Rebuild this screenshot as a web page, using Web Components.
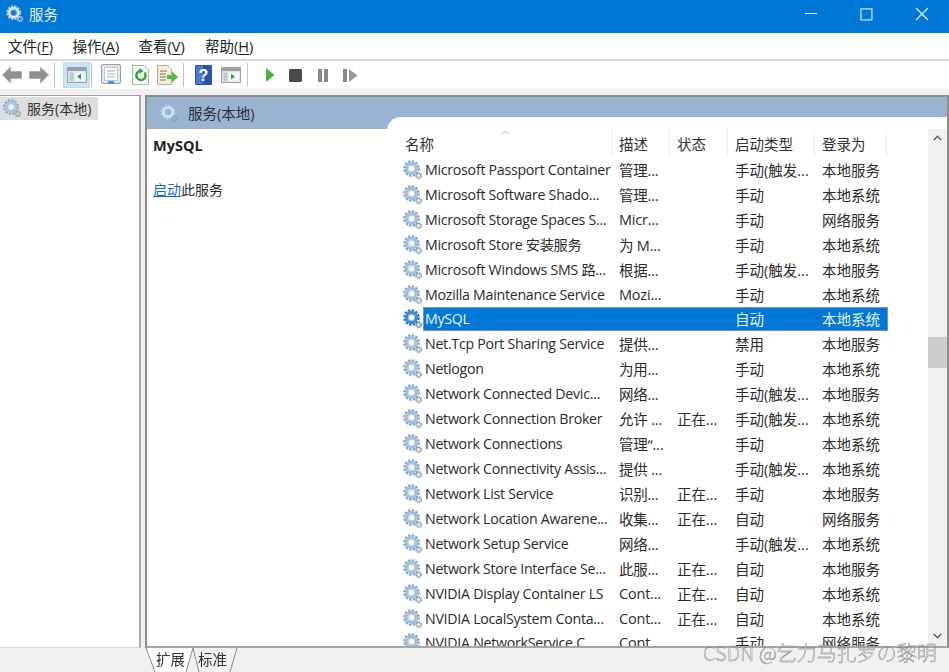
<!DOCTYPE html>
<html lang="zh"><head><meta charset="utf-8"><title>服务</title>
<style>
html,body{margin:0;padding:0;background:#f0f0f0;overflow:hidden}
body{font:14.5px "Open Sans","Noto Sans CJK SC",sans-serif;color:#2b2b2b}
</style></head><body>
<svc-window></svc-window>
<script>
const FONT='"Open Sans","Noto Sans CJK SC",sans-serif';
class GearIcon extends HTMLElement{
  connectedCallback(){
    const s=this.getAttribute('size')||20, v=this.getAttribute('variant')||'';
    const c=v==='sel'?['#3f8ccb','#2b78bb','#6a98c0']:v==='light'?['#cfe2f1','#a9c6de','#8aa6c0']:v==='title'?['#dbe9f6','#b3cee6','#9fbedb']:v==='tree'?['#a8c6df','#86a9c9','#9aa8b4']:['#a3c1dc','#7fa5c9','#98a7b4'];
    this.attachShadow({mode:'open'}).innerHTML=`<style>:host{display:inline-flex;flex:none;width:${s}px;height:${s}px}svg{width:100%;height:100%;display:block}</style>
    <svg viewBox="0 0 20 20"><circle cx="8.5" cy="8.5" r="7" fill="none" stroke="${c[1]}" stroke-width="2.6" stroke-dasharray="2.4 1.27"/>
    <circle cx="8.5" cy="8.5" r="5" fill="none" stroke="${c[0]}" stroke-width="3"/>
    <circle cx="8.5" cy="8.5" r="3.2" fill="${v==='title'?'#1c78c8':v==='light'?'#9ab3d1':'#fff'}" stroke="${c[1]}" stroke-width=".6"/>
    <circle cx="15.6" cy="15.6" r="2.7" fill="none" stroke="${c[2]}" stroke-width="1.8" stroke-dasharray="1.4 .7"/>
    <circle cx="15.6" cy="15.6" r="1.9" fill="none" stroke="${c[2]}" stroke-width="1"/></svg>`;
  }
}
customElements.define('gear-icon',GearIcon);

class SvcTitlebar extends HTMLElement{
  constructor(){super();this.attachShadow({mode:'open'}).innerHTML=`<style>
  :host{display:flex;align-items:center;height:33px;background:#0078d7;color:#fff;flex:none}
  .ic{margin-left:6px;margin-bottom:5px}.t{margin-left:5px;font-size:14.5px;flex:1;opacity:.9;padding-bottom:6px}
  .b{width:55.5px;height:33px;display:flex;align-items:center;justify-content:center;padding-bottom:5px;box-sizing:border-box}
  svg{display:block}
  </style><gear-icon class="ic" size="18" variant="title"></gear-icon><span class="t">服务</span>
  <span class="b"><svg width="12" height="2"><rect width="12" height="1" y="0" fill="#fff"/></svg></span>
  <span class="b"><svg width="13" height="13" fill="none" stroke="#cfe4f7" stroke-width="1.2"><rect x=".9" y=".9" width="11" height="11"/></svg></span>
  <span class="b" style="margin-right:-1px"><svg width="14" height="14" stroke="#e3f0fb" stroke-width="1.2"><path d="M1 1l12 12M13 1L1 13"/></svg></span>`;}
}
customElements.define('svc-titlebar',SvcTitlebar);

class SvcMenubar extends HTMLElement{
  constructor(){super();this.attachShadow({mode:'open'}).innerHTML=`<style>
  :host{display:flex;align-items:center;height:26px;background:#fff;border-bottom:2px solid #d9d9d9;padding-left:8px;gap:20px;font-size:14.5px;flex:none;color:#222}
  u{text-underline-offset:2px}span{white-space:nowrap;width:44.5px;padding-bottom:2px}
  </style><span>文件(<u>F</u>)</span><span>操作(<u>A</u>)</span><span style="margin-left:1.5px">查看(<u>V</u>)</span><span style="margin-left:2px">帮助(<u>H</u>)</span>`;}
}
customElements.define('svc-menubar',SvcMenubar);

class TbSep extends HTMLElement{
  constructor(){super();this.attachShadow({mode:'open'}).innerHTML=`<style>:host{display:block;flex:none;width:1px;height:24px;background:#c4c4c4}</style>`;}
}
customElements.define('tb-sep',TbSep);

class SvcToolbar extends HTMLElement{
  constructor(){super();
  const win=(x)=>`<svg width="20" height="20" viewBox="0 0 20 20"><rect x=".5" y="2.5" width="19" height="15" fill="#dfe6ea" stroke="#98a3a9"/><rect x="1" y="3" width="18" height="3" fill="#98a3a9"/><rect x="2.5" y="7.5" width="4" height="8.5" fill="#bccad2"/><rect x="7.5" y="7.5" width="10" height="8.5" fill="#f5f7f8"/>${x.c}</svg>`;
  this.attachShadow({mode:'open'}).innerHTML=`<style>
  :host{display:flex;align-items:center;height:28px;background:#fff;flex:none}
  svg{display:block;flex:none}
  .active{margin-left:8px;width:27px;height:26px;background:#cce4f7;border:1px solid #b5dcfa;box-sizing:border-box;display:flex;align-items:center;justify-content:center}
  </style>
  <svg style="margin-left:2px" width="20" height="18" viewBox="0 0 20 18"><path d="M.5 9L8.5 1v4.5h11v7h-11V17z" fill="#8f8f8f" stroke="#b0b0b0"/></svg>
  <svg style="margin-left:7px" width="20" height="18" viewBox="0 0 20 18"><path d="M19.5 9L11.5 1v4.5H.5v7h11V17z" fill="#8f8f8f" stroke="#b0b0b0"/></svg>
  <tb-sep style="margin-left:5px"></tb-sep>
  <span class="active">${win({c:'<path d="M14 8.5v6l-4-3z" fill="#2aa53a"/>'})}</span>
  <tb-sep style="margin-left:1px"></tb-sep>
  <svg style="margin-left:9px" width="20" height="22" viewBox="0 0 20 22"><rect x=".5" y=".5" width="19" height="19" rx="1.5" fill="#e4e7e9" stroke="#989da1"/><rect x="3.5" y="3.5" width="13" height="13" fill="#fbfcfd" stroke="#c3c7cb"/><path d="M6 7h8M6 10h8M6 13h8" stroke="#9db0bf"/><rect x="7" y="17" width="6" height="3" fill="#3b9ad8"/></svg>
  <svg style="margin-left:11px" width="17" height="20" viewBox="0 0 17 20"><path d="M.5.5h12l4 4v15H.5z" fill="#f7f7f5" stroke="#b0b0aa"/><path d="M12.5 7.5a4.6 4.6 0 1 1-4-1.6" fill="none" stroke="#2aa53a" stroke-width="2.4"/><path d="M7.5 3v6l4-3z" fill="#2aa53a"/></svg>
  <svg style="margin-left:8px" width="21" height="20" viewBox="0 0 21 20"><path d="M.5.5h10l4 4v15H.5z" fill="#f6efd6" stroke="#b0ab96"/><path d="M3 6h7M3 9h6M3 12h6M3 15h6" stroke="#78735f"/><path d="M10 10h5V6.5l6 5.5-6 5.5V14h-5z" fill="#56b948"/></svg>
  <tb-sep style="margin-left:5px"></tb-sep>
  <svg style="margin-left:11px" width="17" height="20" viewBox="0 0 17 20"><rect width="17" height="20" rx="1" fill="#2d52b5"/><rect x="1" y="1" width="7" height="18" fill="#5077d8"/><text x="8.5" y="16" font-size="16" font-weight="700" font-family="Liberation Sans" text-anchor="middle" fill="#fff">?</text></svg>
  <span style="margin-left:9px">${win({c:'<path d="M10 8.5v6l4-3z" fill="#2aa53a"/>'})}</span>
  <tb-sep style="margin-left:6px"></tb-sep>
  <svg style="margin-left:17px" width="10" height="14" viewBox="0 0 10 14"><path d="M1 0l8.5 7L1 14z" fill="#45b649"/></svg>
  <svg style="margin-left:14px" width="13" height="13" viewBox="0 0 13 13"><rect width="13" height="13" rx="1.5" fill="#4a4a4a"/></svg>
  <svg style="margin-left:16px" width="10" height="13" viewBox="0 0 10 13"><rect width="4" height="13" fill="#8a8a8a"/><rect x="6" width="4" height="13" fill="#8a8a8a"/></svg>
  <svg style="margin-left:15px" width="15" height="13" viewBox="0 0 15 13"><rect width="4" height="13" fill="#8a8a8a"/><path d="M6 0l8.5 6.5L6 13z" fill="#9a9a9a"/></svg>`;}
}
customElements.define('svc-toolbar',SvcToolbar);

class SvcTree extends HTMLElement{
  constructor(){super();this.attachShadow({mode:'open'}).innerHTML=`<style>
  :host{display:block;flex:none;width:139px;background:#fff;border-top:1px solid #a0a0a0;border-right:2px solid #a9a9a9;border-bottom:1px solid #d8d8d8;box-sizing:content-box}
  .i{display:flex;align-items:center;width:98px;height:23px;margin-top:1px;background:#dedede;font-size:14px;white-space:nowrap;box-sizing:border-box;padding-left:3px;color:#333}
  span{margin-left:5px;padding-bottom:2px}
  </style><div class="i"><gear-icon size="19" variant="tree"></gear-icon><span>服务(本地)</span></div>`;}
}
customElements.define('svc-tree',SvcTree);

class SvcRow extends HTMLElement{
  constructor(){super();
    this.attachShadow({mode:'open'});
    this._a=n=>this.getAttribute(n)||'';
  }
  connectedCallback(){
    const a=this._a, sel=this.hasAttribute('selected');
    this.shadowRoot.innerHTML=`<style>
    :host{display:flex;height:24.93px;flex:none;align-items:center;white-space:nowrap;font-size:14.5px;color:#2b2b2b}
    .ic{width:22px;flex:none;display:flex;padding-left:2px;padding-top:1px;box-sizing:border-box}
    .c{display:flex;align-items:center;height:100%;box-sizing:border-box;flex:none;${sel?'background:#0078d7;color:#e8f3fc;outline:1px solid #7c92a8;outline-offset:-1px;':''}}
    .c span{display:block;overflow:hidden;padding-left:7px;box-sizing:border-box}
    .c span.n{width:189px;padding-left:2px;font-size:14.2px;letter-spacing:-.27px}
    .d{width:58px;letter-spacing:-.2px}.s{width:58px}.t{width:87px}.l{width:73px}
    </style><div class="ic"><gear-icon size="20" variant="${sel?'sel':''}"></gear-icon></div>
    <div class="c"><span class="n">${a('name')}</span><span class="d">${a('desc')}</span><span class="s">${a('status')}</span><span class="t">${a('start')}</span><span class="l">${a('logon')}</span></div>`;
  }
}
customElements.define('svc-row',SvcRow);

class SvcScrollbar extends HTMLElement{
  constructor(){super();this.attachShadow({mode:'open'}).innerHTML=`<style>
  :host{display:flex;flex-direction:column;flex:none;width:19px;background:#f0f0f0;margin-top:12px;align-items:stretch}
  .a{height:17px;display:flex;align-items:center;justify-content:center;flex:none}
  .t1{height:191px;flex:none}.th{height:31px;flex:none;background:#cdcdcd}.f{flex:1}
  </style><div class="a"><svg width="9" height="6" fill="none" stroke="#606060" stroke-width="1.4"><path d="M.8 5L4.5 1.2 8.2 5"/></svg></div>
  <div class="t1"></div><div class="th"></div><div class="f"></div>
  <div class="a" style="margin-bottom:2px"><svg width="9" height="6" fill="none" stroke="#606060" stroke-width="1.4"><path d="M.8 1L4.5 4.8 8.2 1"/></svg></div>`;}
}
customElements.define('svc-scrollbar',SvcScrollbar);

const ROWS=[
['Microsoft Passport Container','管理...','','手动(触发...','本地服务'],
['Microsoft Software Shado...','管理...','','手动','本地系统'],
['Microsoft Storage Spaces S...','Micr...','','手动','网络服务'],
['Microsoft Store 安装服务','为 M...','','手动','本地系统'],
['Microsoft Windows SMS 路...','根据...','','手动(触发...','本地服务'],
['Mozilla Maintenance Service','Mozi...','','手动','本地系统'],
['MySQL','','','自动','本地系统',1],
['Net.Tcp Port Sharing Service','提供...','','禁用','本地服务'],
['Netlogon','为用...','','手动','本地系统'],
['Network Connected Devic...','网络...','','手动(触发...','本地服务'],
['Network Connection Broker','允许 ...','正在...','手动(触发...','本地系统'],
['Network Connections','管理“...','','手动','本地系统'],
['Network Connectivity Assis...','提供 ...','','手动(触发...','本地系统'],
['Network List Service','识别...','正在...','手动','本地服务'],
['Network Location Awarene...','收集...','正在...','自动','网络服务'],
['Network Setup Service','网络...','','手动(触发...','本地系统'],
['Network Store Interface Se...','此服...','正在...','自动','本地服务'],
['NVIDIA Display Container LS','Cont...','正在...','自动','本地系统'],
['NVIDIA LocalSystem Conta...','Cont...','正在...','自动','本地系统'],
['NVIDIA NetworkService C...','Cont...','','手动','网络服务']];

class SvcList extends HTMLElement{
  constructor(){super();
    const rows=ROWS.map(r=>`<svc-row name="${r[0]}" desc="${r[1]}" status="${r[2]}" start="${r[3]}" logon="${r[4]}"${r[5]?' selected':''}></svc-row>`).join('');
    this.attachShadow({mode:'open'}).innerHTML=`<style>
    :host{display:flex;flex:1;min-width:0;height:100%;background:#fff;border-top-left-radius:14px;overflow:hidden}
    .m{flex:1;min-width:0;padding-left:14px;padding-top:13px;display:flex;flex-direction:column;overflow:hidden;box-sizing:border-box}
    .h{display:flex;height:27px;flex:none;font-size:14.5px;color:#333;position:relative}
    .h span{display:flex;align-items:center;box-sizing:border-box;padding-left:7px;border-right:1px solid #ececec}
    .arr{position:absolute;left:100px;top:0}
    .r{flex:1;overflow:hidden;display:flex;flex-direction:column}
    </style><div class="m"><div class="h"><span style="width:211px;padding-left:4px">名称</span><span style="width:58px">描述</span><span style="width:58px">状态</span><span style="width:87px">启动类型</span><span style="width:72px">登录为</span>
    <svg class="arr" width="9" height="5" fill="none" stroke="#b5b5b5"><path d="M1 4.5L4.5 1 8 4.5"/></svg></div>
    <div class="r">${rows}</div></div><svc-scrollbar></svc-scrollbar>`;}
}
customElements.define('svc-list',SvcList);

class SvcPanel extends HTMLElement{
  constructor(){super();this.attachShadow({mode:'open'}).innerHTML=`<style>
  :host{display:grid;grid-template-columns:240px 1fr;grid-template-rows:20px 1fr;flex:1;min-width:0;border:2px solid #8c8c8c;border-bottom-color:#a6a6a6;background:linear-gradient(#9ab3d1 32px,#fff 32px);box-sizing:border-box;font-size:14.5px}
  .left{grid-row:1/3;display:flex;flex-direction:column;min-width:0}
  .hd{height:32px;flex:none;display:flex;align-items:center;padding-left:13px;background:#9ab3d1;box-sizing:border-box;color:#2a2f36}
  .hd span{margin-left:9px;padding-bottom:2px}
  .bd{padding:7px 6px;background:#fff;flex:1;color:#2b2b2b}
  b{display:block;font-weight:700;font-size:14.5px;line-height:20px;color:#222}
  p{margin:24px 0 0;font-size:14px;line-height:20px}
  a{color:#0a6cce;text-decoration:underline}
  .right{grid-row:2;grid-column:2;min-height:0;display:flex}
  </style><div class="left"><div class="hd"><gear-icon size="19" variant="light"></gear-icon><span>服务(本地)</span></div>
  <div class="bd"><b>MySQL</b><p><a>启动</a>此服务</p></div></div>
  <div class="right"><svc-list></svc-list></div>`;}
}
customElements.define('svc-panel',SvcPanel);

class SvcTabs extends HTMLElement{
  constructor(){super();this.attachShadow({mode:'open'}).innerHTML=`<style>
  :host{display:block;height:24px;flex:none;position:relative;margin-left:145px;background:#f0f0f0}
  .w{display:flex;height:24px;position:relative}
  svg{position:absolute;left:0;top:0}
  .t{position:relative;font-size:14.5px;line-height:24px;color:#333}
  </style>
  <svg width="110" height="25" fill="none"><path d="M1 0L10 25H41L48 0z" fill="#fff"/><path d="M1 0L10 24M41 24L48 0L54 24M92 0L85 24" stroke="#8c8c8c"/></svg>
  <div class="w"><span class="t" style="margin-left:11px">扩展</span><span class="t" style="margin-left:13px">标准</span></div>`;}
}
customElements.define('svc-tabs',SvcTabs);

class SvcWatermark extends HTMLElement{
  constructor(){super();this.attachShadow({mode:'open'}).innerHTML=`<style>
  :host{position:absolute;left:703px;top:640px;font:300 20px/26px "Noto Sans CJK SC","Open Sans",sans-serif;color:rgba(255,255,255,.55);-webkit-text-stroke:.45px rgba(90,90,90,.75);white-space:nowrap}
  </style>CSDN @乞力马扎罗の黎明`;}
}
customElements.define('svc-watermark',SvcWatermark);

class SvcWindow extends HTMLElement{
  constructor(){super();this.attachShadow({mode:'open'}).innerHTML=`<style>
  :host{display:flex;flex-direction:column;width:949px;height:672px;overflow:hidden;position:relative;background:#f0f0f0;font-family:${FONT}}
  .app{flex:1;display:flex;flex-direction:column;min-height:0;filter:blur(.3px)}
  .gap{height:6px;flex:none;background:#f0f0f0}
  .main{height:553px;flex:none;display:flex;gap:4px;background:#f0f0f0}
  </style><div class="app"><svc-titlebar></svc-titlebar><svc-menubar></svc-menubar><svc-toolbar></svc-toolbar><div class="gap"></div>
  <div class="main"><svc-tree></svc-tree><svc-panel></svc-panel></div><svc-tabs></svc-tabs></div><svc-watermark></svc-watermark>`;}
}
customElements.define('svc-window',SvcWindow);
</script></body></html>
